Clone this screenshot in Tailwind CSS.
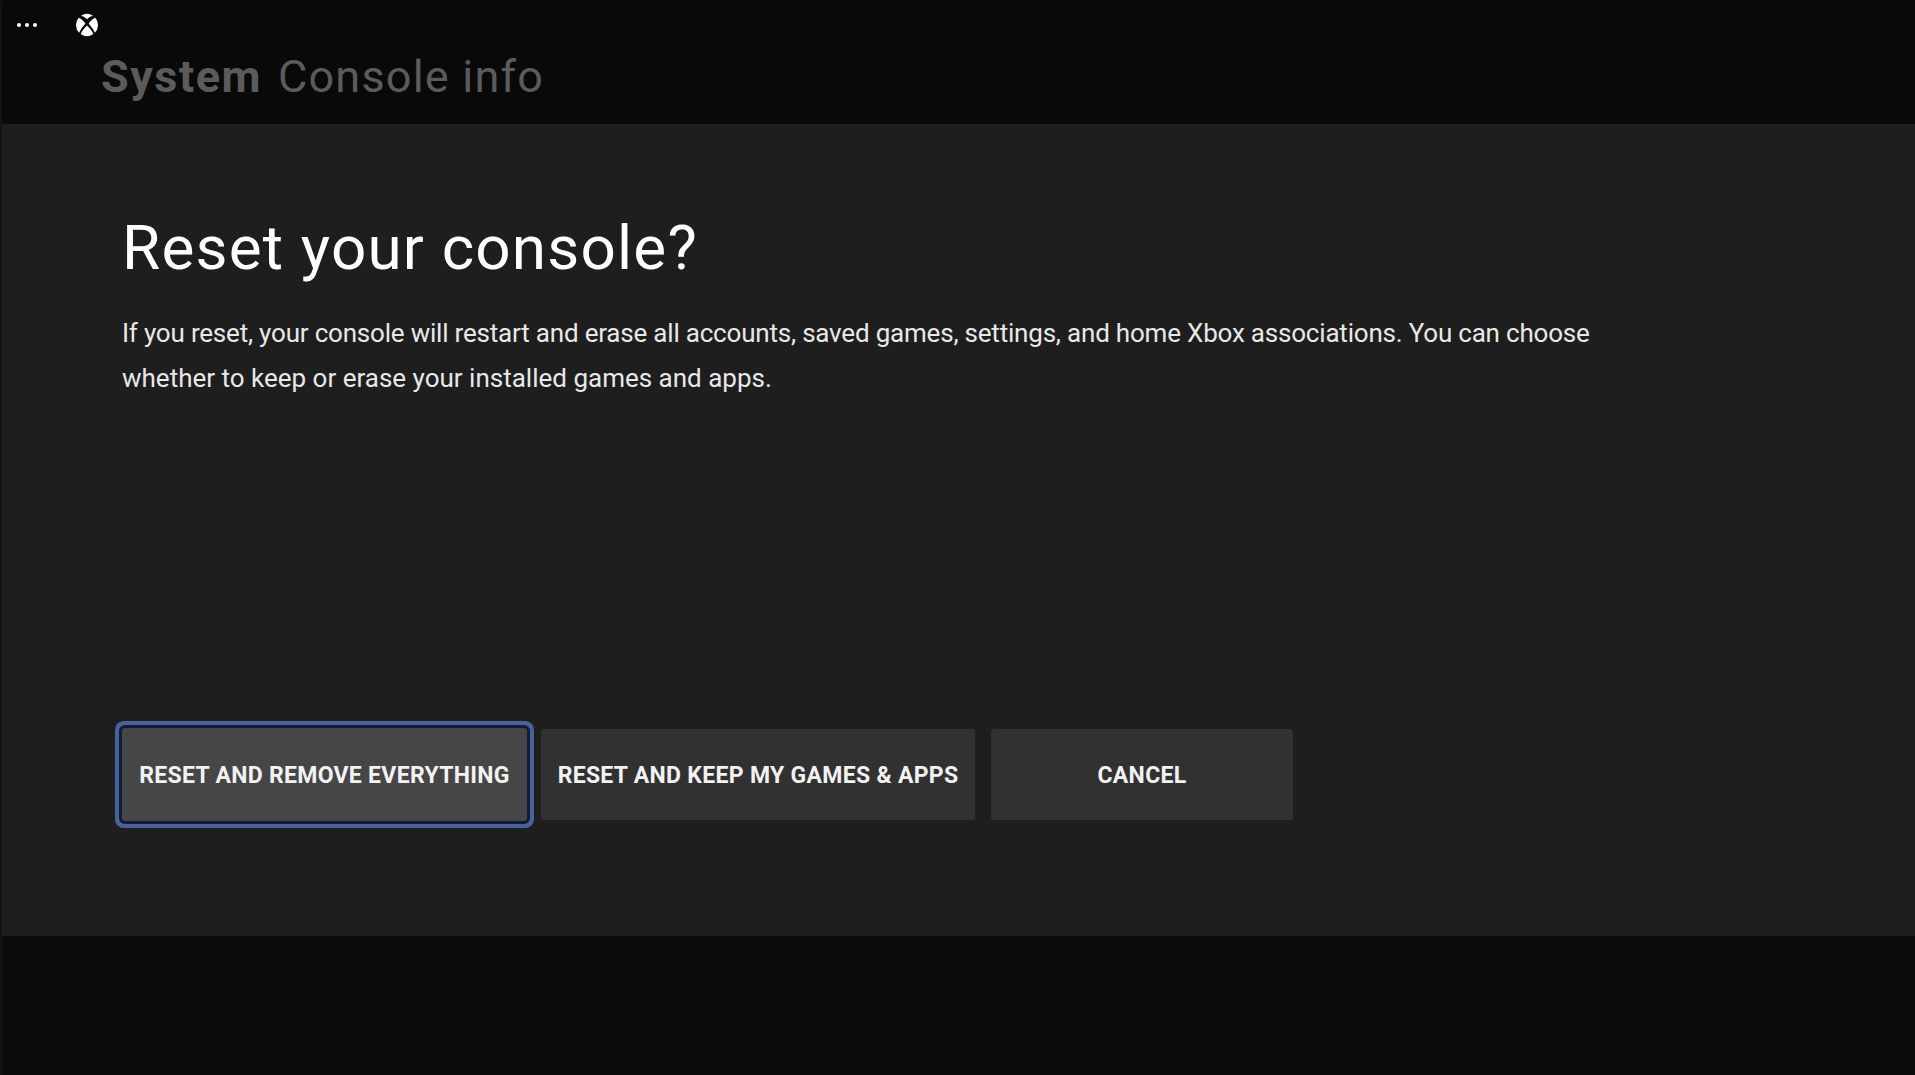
<!DOCTYPE html>
<html lang="en">
<head>
  <meta charset="UTF-8" />
  <title>Reset your console?</title>
  <script src="https://cdn.jsdelivr.net/npm/@tailwindcss/browser@4"></script>
</head>
<body class="bg-[#0b0b0b] font-['Roboto',sans-serif] overflow-hidden">
  <div class="flex flex-col w-[1915px] h-[1075px] border-l-2 border-[#14140a]">
    <!-- top bar with page title -->
    <header class="h-[124px] shrink-0 bg-[#090909] border-t border-[#120e04] pl-[15px] pt-[12px]">
      <div class="flex items-center h-[24px]">
        <div class="flex gap-[4px] w-[58px]">
          <span class="w-[4px] h-[4px] rounded-full bg-white"></span>
          <span class="w-[4px] h-[4px] rounded-full bg-white"></span>
          <span class="w-[4px] h-[4px] rounded-full bg-white"></span>
        </div>
        <svg class="w-[24px] h-[24px]" viewBox="0 0 24 24" fill="#fff">
          <path d="M5.800 2.900A11 11 0 0 1 18.200 2.900C15.800 3 13.500 4.600 12 6.300C10.500 4.600 8.200 3 5.800 2.900Z" />
          <path d="M3.700 4.800C6.500 6 9 8.500 10.400 10.600C7.200 14.500 4.800 17.800 4.200 19.800A11 11 0 0 1 3.700 4.800Z" />
          <path d="M20.300 4.800C17.500 6 15 8.500 13.600 10.600C16.800 14.500 19.200 17.800 19.800 19.800A11 11 0 0 0 20.300 4.800Z" />
          <path d="M12 12.400C9 15 6.300 18.800 5.700 21A11 11 0 0 0 18.300 21C17.700 18.800 15 15 12 12.400Z" />
        </svg>
      </div>
      <div class="flex items-baseline gap-[16px] ml-[84px] mt-[14px] text-[45px] leading-[52px] text-[#5b5b5b]">
        <span class="font-bold tracking-[1.5px]">System</span>
        <span class="tracking-[1.2px]">Console info</span>
      </div>
    </header>

    <main class="h-[812px] shrink-0 bg-[#1e1e1e] pl-[120px] pt-[88px]">
      <h1 class="text-[62px] leading-[72px] text-white tracking-[1.2px]">Reset your console?</h1>
      <p class="mt-[27px] text-[26px] leading-[45px] text-[#e8e8e8]">
        <span class="block tracking-[-0.2px]">If you reset, your console will restart and erase all accounts, saved games, settings, and home Xbox associations. You can choose</span>
        <span class="block">whether to keep or erase your installed games and apps.</span>
      </p>
      <div class="flex items-center mt-[327px] h-[93px] text-[23px] font-bold text-[#f2f2f2] tracking-[0.3px]">
        <button class="w-[405px] h-[93px] pt-[3px] rounded-[3px] bg-[#464646] shadow-[0_0_0_3px_#101c38,0_0_0_7px_#48639b] whitespace-nowrap">RESET AND REMOVE EVERYTHING</button>
        <button class="ml-[14px] w-[434px] h-[91px] pt-[3px] rounded-[3px] bg-[#313131] whitespace-nowrap">RESET AND KEEP MY GAMES &amp; APPS</button>
        <button class="ml-[16px] w-[302px] h-[91px] pt-[3px] rounded-[3px] bg-[#313131]">CANCEL</button>
      </div>
    </main>

    <footer class="flex-1 bg-[#0c0c0c]"></footer>
  </div>
</body>
</html>
